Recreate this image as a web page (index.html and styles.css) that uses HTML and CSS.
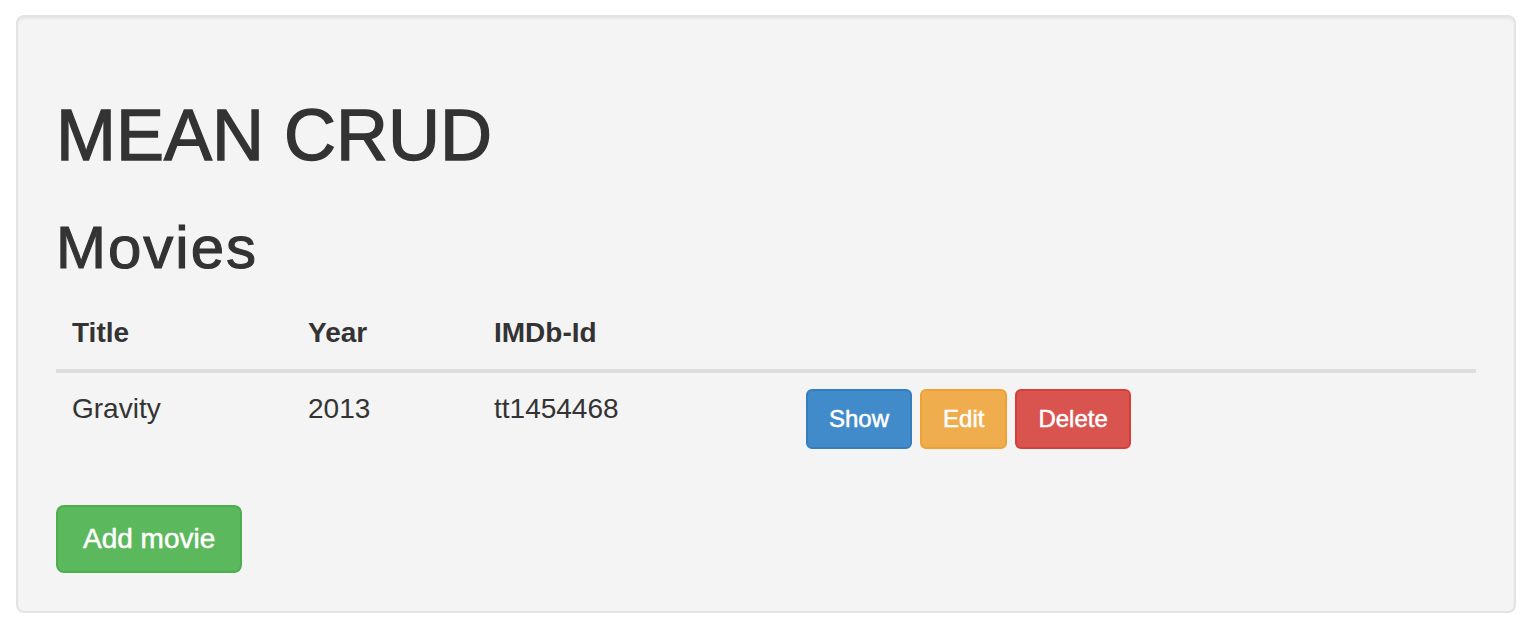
FILE: index.html
```html
<!DOCTYPE html>
<html>
<head>
<meta charset="utf-8">
<title>MEAN CRUD</title>
<link rel="stylesheet" href="styles.css">
</head>
<body>
<div class="well">
  <h1 class="title">MEAN CRUD</h1>
  <h2 class="subtitle">Movies</h2>
  <table class="table">
    <thead>
      <tr>
        <th class="col-title">Title</th>
        <th class="col-year">Year</th>
        <th class="col-imdb">IMDb-Id</th>
        <th class="col-actions"></th>
      </tr>
    </thead>
    <tbody>
      <tr>
        <td>Gravity</td>
        <td>2013</td>
        <td>tt1454468</td>
        <td>
          <div class="actions">
            <button class="btn btn-sm btn-primary">Show</button>
            <button class="btn btn-sm btn-warning">Edit</button>
            <button class="btn btn-sm btn-danger">Delete</button>
          </div>
        </td>
      </tr>
    </tbody>
  </table>
  <button class="btn btn-success">Add movie</button>
</div>
</body>
</html>
```
FILE: styles.css
```css
html, body {
  margin: 0;
  padding: 0;
  background: #ffffff;
}
body {
  font-family: "Liberation Sans", Arial, Helvetica, sans-serif;
  font-size: 28px;
  line-height: 40px;
  color: #333333;
  padding: 15px 18px 0 16px;
}
.well {
  background: #f4f4f4;
  border: 2px solid #e3e3e3;
  border-radius: 8px;
  box-shadow: inset 0 2px 2px rgba(0, 0, 0, 0.05);
  padding: 38px;
  width: 1420px;
}
.title {
  font-size: 72px;
  font-weight: normal;
  line-height: 1.1;
  margin: 41px 0 20px 0;
  -webkit-text-stroke: 1.4px #333333;
}
.subtitle {
  font-size: 60px;
  font-weight: normal;
  line-height: 1.1;
  letter-spacing: 2px;
  margin: 40px 0 16px 0;
  -webkit-text-stroke: 1.1px #333333;
}
.table {
  width: 100%;
  border-collapse: collapse;
  border-spacing: 0;
  margin-bottom: 40px;
  table-layout: fixed;
}
.table th,
.table td {
  padding: 16px;
  text-align: left;
  vertical-align: top;
  line-height: 40px;
}
.table th {
  font-weight: bold;
  vertical-align: bottom;
  border-bottom: 4px solid #dddddd;
}
.col-title { width: 204px; }
.col-year { width: 154px; }
.col-imdb { width: 280px; }
.actions {
  display: flex;
  gap: 8px;
}
.btn {
  display: inline-block;
  font-family: "Liberation Sans", Arial, Helvetica, sans-serif;
  color: #ffffff;
  border: 2px solid transparent;
  border-radius: 8px;
  font-size: 28px;
  line-height: 40px;
  padding: 12px 25px;
  margin: 0;
  cursor: pointer;
  -webkit-text-stroke: 0.5px #ffffff;
}
.btn-sm {
  font-size: 24px;
  line-height: 36px;
  padding: 10px 21px;
  border-radius: 6px;
}
.btn-primary { background: #428bca; border-color: #357ebd; }
.btn-warning { background: #f0ad4e; border-color: #eea236; }
.btn-danger { background: #d9534f; border-color: #d43f3a; }
.btn-success { background: #5cb85c; border-color: #4cae4c; }
```
